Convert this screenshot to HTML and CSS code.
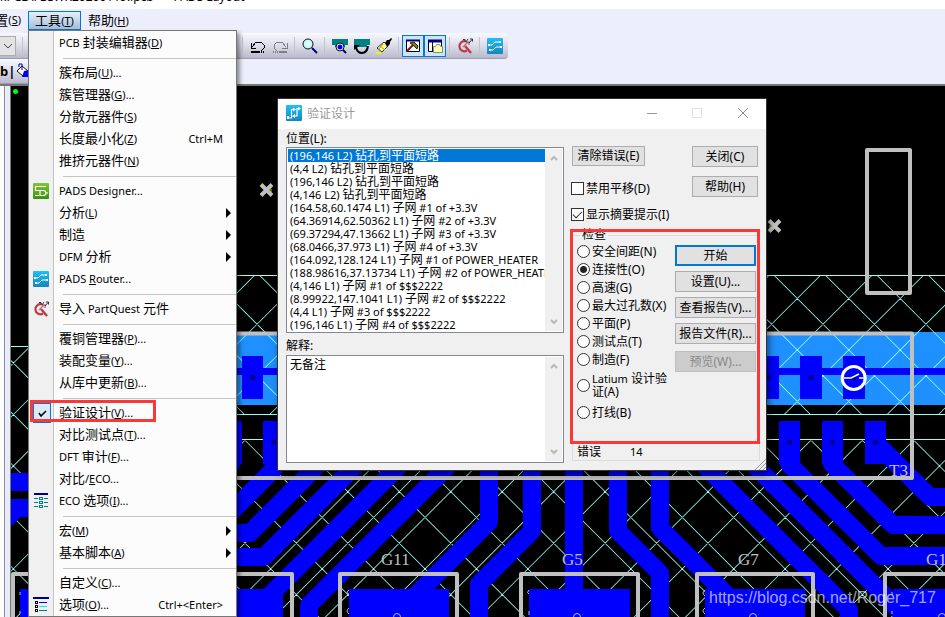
FILE: index.html
```html
<!DOCTYPE html>
<html lang="zh-CN">
<head>
<meta charset="utf-8">
<title>PADS Layout</title>
<link rel="stylesheet" href="styles.css">
</head>
<body>
<div class="app">
  <header class="titlebar"><span>kPCB\FLCWK20200119.ipcb * - PADS Layout</span></header>
  <nav class="menubar">
    <button class="menubar-item clipped" type="button">置<small>(<u>S</u>)</small></button>
    <button class="menubar-item open" type="button">工具<small>(<u>T</u>)</small></button>
    <button class="menubar-item" type="button">帮助<small>(<u>H</u>)</small></button>
  </nav>
  <div class="toolbar-row">
    <div class="toolbar">
      <button class="combo" type="button" aria-label="层"><svg width="10" height="6" viewBox="0 0 10 6"><path d="M1 1l4 4 4-4" fill="none" stroke="#444"/></svg></button>
      <i class="sep"></i>
      <div class="tools">
        <i class="sep"></i>
        <button class="tool" type="button" aria-label="撤销"><svg width="16" height="16" viewBox="0 0 16 16" shape-rendering="crispEdges"><path d="M1 5v5h5M2 9l4-5h5l3 3v3l-2 2h-1" fill="none" stroke="#000"/><path d="M1 14h8" stroke="#000" stroke-width="2"/><path d="M9 14h6" stroke="#000" stroke-width="2" stroke-dasharray="1 1"/></svg></button>
        <button class="tool" type="button" aria-label="重做"><svg width="16" height="16" viewBox="0 0 16 16" shape-rendering="crispEdges"><path d="M15 5v5h-5M14 9l-4-5H5L2 7v3l2 2h1" fill="none" stroke="#7d7d88"/><path d="M7 14h8" stroke="#7d7d88" stroke-width="2"/><path d="M1 14h6" stroke="#7d7d88" stroke-width="2" stroke-dasharray="1 1"/></svg></button>
        <i class="sep"></i>
        <button class="tool" type="button" aria-label="缩放"><svg width="16" height="16" viewBox="0 0 16 16"><circle cx="6" cy="6" r="5" fill="#c9fafa" stroke="#111"/><path d="M4 7l3-4M6 8l2-3" stroke="#fff"/><path d="M10 10l5 5" stroke="#00007c" stroke-width="2"/></svg></button>
        <i class="sep"></i>
        <button class="tool" type="button" aria-label="板视图"><svg width="16" height="16" viewBox="0 0 16 16"><path d="M0 1h16v6h-3v2H3V7H0z" fill="#008080"/><circle cx="8" cy="9" r="4" fill="#fff" stroke="#111"/><circle cx="8" cy="9" r="2.5" fill="#00f"/><path d="M11 12l3 3" stroke="#00007c" stroke-width="2"/></svg></button>
        <button class="tool" type="button" aria-label="刷新"><svg width="16" height="16" viewBox="0 0 16 16"><path d="M0 1h16v6h-3v2H3V7H0z" fill="#008080"/><path d="M2 9q1 6 6 6 5 0 6-7" fill="none" stroke="#000" stroke-width="2"/><path d="M0 12V7h6z" fill="#000"/></svg></button>
        <button class="tool" type="button" aria-label="高亮"><svg width="16" height="16" viewBox="0 0 16 16"><path d="M8 4l4 4-6 6-5-4z" fill="#ffff9a" stroke="#333"/><path d="M4 8l5 4M3 11l4-5" stroke="#b0a800"/><path d="M9 5l2-3h2l2-2 1 1-2 3v2l-3 3z" fill="#000"/><path d="M0 15h5" stroke="#fe0" stroke-width="2"/></svg></button>
        <i class="sep"></i>
        <span class="pressed">
          <button class="tool" type="button" aria-label="设计工具"><svg width="16" height="16" viewBox="0 0 16 16"><path d="M1.500 2.500h13v11h-13z" fill="#fff" stroke="#000"/><path d="M1 2.500h14" stroke="#000080" stroke-width="2"/><path d="M2 13l6-6" stroke="#801010" stroke-width="2"/><path d="M5 5l4-1 4 4-1 3-4-4z" fill="#808000" stroke="#222"/></svg></button>
          <button class="tool" type="button" aria-label="项目浏览器"><svg width="16" height="16" viewBox="0 0 16 16"><path d="M1.500 2.500h13v11h-13z" fill="#fff" stroke="#000"/><path d="M1 3h14" stroke="#000080" stroke-width="3"/><path d="M5.500 4v9" stroke="#111"/><path d="M6.500 8.500h2l1-2h3l1 2h2v6h-9z" fill="#ffffb0" stroke="#888"/></svg></button>
        </span>
        <i class="sep"></i>
        <button class="tool" type="button" aria-label="PartQuest"><svg width="16" height="16" viewBox="0 0 16 16"><use href="#pq"/></svg></button>
        <i class="sep"></i>
        <button class="tool" type="button" aria-label="PADS Router"><svg width="16" height="16" viewBox="0 0 16 16"><use href="#router"/></svg></button>
      </div>
    </div>
  </div>
  <div class="toolbar-row second">
    <div class="toolbar"><b>b|</b>
      <button class="tool" type="button" aria-label="填充"><svg width="16" height="16" viewBox="0 0 16 16"><path d="M2 8l5-5 6 5-5 5z" fill="#fff" stroke="#111"/><path d="M4 4V1h3v6" fill="none" stroke="#00a"/><path d="M9 8l5-1-1 5h2v2H7z" fill="#00f"/></svg></button>
    </div>
  </div>

  <main class="workspace">
    <aside class="side"></aside>
    <svg class="board" viewBox="11 86 934 531" preserveAspectRatio="xMinYMin slice" role="img" aria-label="PCB">
      <defs>
        <clipPath id="clipTop"><rect x="237" y="275" width="708" height="139"/></clipPath>
        <clipPath id="clipLow"><path d="M11 346H237V439H945V617H11z"/></clipPath>
        <linearGradient id="sky" x1="0" y1="0" x2="0" y2="1"><stop offset="0" stop-color="#1fc0f5"/><stop offset="1" stop-color="#1287bd"/></linearGradient>
        <g id="router"><rect width="16" height="16" rx="1" fill="url(#sky)"/><path d="M2 7h3l3-3h5M3 12h3l3-3h5" fill="none" stroke="#fff"/><path d="M1 6h2v2H1zM12 3h2v2h-2zM2 11h2v2H2zM13 8h2v2h-2z" fill="#fff"/></g>
        <g id="pq"><path d="M9 3.500A5 5 0 1 0 10 12.500" fill="none" stroke="#c23a48" stroke-width="2.200"/><path d="M8 8l6 7" stroke="#c23a48" stroke-width="2.500"/><path d="M6 9l5-5M9 4h3v3" fill="none" stroke="#b0707a" stroke-width="1.400"/><path d="M6 1.500h2v2M9 4l2-3M12 5l3-3.500M13 1h2.500v2.500" fill="none" stroke="#333"/></g>
      </defs>
      <rect x="11" y="86" width="934" height="531" fill="#000"/>
      <rect x="237" y="332" width="708" height="73" fill="#1e90ff"/>
      <g clip-path="url(#clipTop)"><path class="stripes" transform="translate(797.3 298.5)" d="M-1029 -1029L1029 1029M-1029 1029L1029 -1029"/></g>
      <g clip-path="url(#clipLow)"><path class="stripes" transform="translate(708 491.7)" d="M-1029 -1029L1029 1029M-1029 1029L1029 -1029"/></g>
      <path class="hatch" d="M237 275.500H945M237 414.500H945M237 439.500H945M11 346.500H237"/>
      <path class="bus" d="M237 371.500H945"/>
      <path class="pad" d="M242 356h21v43h-21zM757 356h22v43h-22zM800 356h22v43h-22zM843 356h22v43h-22zM220 421h22v43h-22zM263 421h22v43h-22zM779 421h21v43h-21zM822 421h21v43h-21zM865 421h21v43h-21z"/>
      <path class="pad" d="M20 589h100v28H20zM183 589h100v28H183zM349 589h100v28H349zM529 589h101v28H529zM705 589h100v28H705zM893 589h52v28H893z"/>
      <g class="trace">
        <path d="M11 482H100M11 508H100M17 508L5 520"/>
        <path d="M274 440V469L200 543M231 440V464L190 505M317 464V466L250 533H200M370 451L264 557H200M410 455L266 599M450 464L309 605V617"/>
        <path d="M489 460V522L412 599M532 460V531L479 584V617M574 460V599M618 460V531L660 573V617M660 460V528L731 599"/>
        <path d="M697 458L849 610V617M740 451L903 614M789 442V464L881 556H945M832 442V464L893 525H945M875 442L930 497H945"/>
      </g>
      <g fill="#000080"><circle cx="252.500" cy="377.500" r="2.500"/><circle cx="768" cy="377.500" r="2.500"/><circle cx="811" cy="377.500" r="2.500"/><circle cx="854" cy="377.500" r="2.500"/><circle cx="273.500" cy="442" r="2.500"/><circle cx="789.500" cy="442" r="2.500"/><circle cx="832.500" cy="442" r="2.500"/><circle cx="875.500" cy="442" r="2.500"/></g>
      <g class="silk">
        <path d="M237 333.500H912V478H237"/>
        <rect x="867" y="150" width="43" height="143"/>
        <path d="M13 617V574H130V617M174 617V574H292V617M340 617V574H457V617M521 617V574H638V617M697 617V574H813V617M885 617V574H945"/>
      </g>
      <g class="silk thin"><circle cx="397" cy="617" r="3.500"/><circle cx="577" cy="617" r="3.500"/><circle cx="753" cy="617" r="3.500"/><circle cx="942" cy="617" r="3.500"/>
        <path d="M349 590q-4 3 0 6M349 608q-4 3 0 6M529 590q-3 3 0 4M529 611v4M705 590q-4 3 0 6M705 608q-4 3 0 6M892 592v3M892 611v3M20 592v3M20 611v3"/></g>
      <path class="mark" d="M261 184.500l11 11M272 184.500l-11 11M769 220.500l11 11M780 220.500l-11 11"/>
      <path d="M271 189v3M770 225v3" stroke="#c8c800"/>
      <circle cx="853.700" cy="378" r="11.500" fill="none" stroke="#fff" stroke-width="3"/>
      <path d="M844 378h7l8-4M859 378h5" fill="none" stroke="#fff" stroke-width="1.500"/>
      <circle cx="15.500" cy="91.500" r="2.500" fill="#0f0"/>
      <g class="ref"><text x="381" y="565">G11</text><text x="562" y="565">G5</text><text x="738" y="565">G7</text><text x="926" y="565">G13</text><text x="889" y="476">T3</text></g>
      <text class="watermark" x="709" y="603">https://blog.csdn.net/Roger_717</text>
    </svg>
  </main>

  <div class="menu" role="menu">
    <button type="button"><i></i><span>PCB <b>封装编辑器</b>(<u>D</u>)</span></button>
    <hr>
    <button type="button"><i></i><span><b>簇布局</b>(<u>U</u>)...</span></button>
    <button type="button"><i></i><span><b>簇管理器</b>(<u>G</u>)...</span></button>
    <button type="button"><i></i><span><b>分散元器件</b>(<u>S</u>)</span></button>
    <button type="button"><i></i><span><b>长度最小化</b>(<u>Z</u>)</span><kbd>Ctrl+M</kbd></button>
    <button type="button"><i></i><span><b>推挤元器件</b>(<u>N</u>)</span></button>
    <hr>
    <button type="button"><i><svg width="16" height="16" viewBox="0 0 16 16"><defs><linearGradient id="leaf" x1="0" y1="0" x2="0" y2="1"><stop offset="0" stop-color="#7fc832"/><stop offset="1" stop-color="#3d8f12"/></linearGradient></defs><rect width="16" height="16" rx="1" fill="url(#leaf)"/><path d="M13 3.500H2.500v4H7M2 12.500h4M7 7.500h3q3 0 3 2.500t-3 2.500H7zM13 10h2" fill="none" stroke="#fff" stroke-width="1.200"/></svg></i><span>PADS Desi<u>g</u>ner...</span></button>
    <button type="button"><i></i><span><b>分析</b>(<u>L</u>)</span><em></em></button>
    <button type="button"><i></i><span><b>制造</b></span><em></em></button>
    <button type="button"><i></i><span>DFM <b>分析</b></span><em></em></button>
    <button type="button"><i><svg width="16" height="16" viewBox="0 0 16 16"><use href="#router"/></svg></i><span>PADS <u>R</u>outer...</span></button>
    <hr>
    <button type="button"><i><svg width="16" height="16" viewBox="0 0 16 16"><use href="#pq"/></svg></i><span><b>导入</b> PartQuest <b>元件</b></span></button>
    <hr>
    <button type="button"><i></i><span><b>覆铜管理器</b>(<u>P</u>)...</span></button>
    <button type="button"><i></i><span><b>装配变量</b>(<u>Y</u>)...</span></button>
    <button type="button"><i></i><span><b>从库中更新</b>(<u>B</u>)...</span></button>
    <hr>
    <button type="button" class="checked"><i><svg width="18" height="20" viewBox="0 0 18 20"><rect x=".5" y=".5" width="17" height="19" fill="#d9e9f8" stroke="#0078d7"/><path d="M6 10l2 3 5-5" fill="none" stroke="#000" stroke-width="1.500"/></svg></i><span><b>验证设计</b>(<u>V</u>)...</span></button>
    <button type="button"><i></i><span><b>对比测试点</b>(<u>T</u>)...</span></button>
    <button type="button"><i></i><span>DFT <b>审计</b>(<u>F</u>)...</span></button>
    <button type="button"><i></i><span><b>对比</b>/<u>E</u>CO...</span></button>
    <button type="button"><i><svg width="16" height="16" viewBox="0 0 16 16" shape-rendering="crispEdges"><path d="M1 1h14" stroke="#000080" stroke-width="2"/><path d="M1 5.500h4M1 9.500h4M1 13.500h4M11 5.500h4M11 9.500h4M11 13.500h4" stroke="#008080"/><path d="M6.500 4.500h3v2h-3zM6.500 8.500h3v2h-3zM6.500 12.500h3v2h-3z" fill="#fff" stroke="#008080"/></svg></i><span>ECO <b>选项</b>(<u>I</u>)...</span></button>
    <hr>
    <button type="button"><i></i><span><b>宏</b>(<u>M</u>)</span><em></em></button>
    <button type="button"><i></i><span><b>基本脚本</b>(<u>A</u>)</span><em></em></button>
    <hr>
    <button type="button"><i></i><span><b>自定义</b>(<u>C</u>)...</span></button>
    <button type="button"><i><svg width="16" height="16" viewBox="0 0 16 16" shape-rendering="crispEdges"><path d="M0 1h16" stroke="#000080" stroke-width="2"/><path d="M2.500 4.500h2v2h-2zM2.500 8.500h2v2h-2zM2.500 12.500h2v2h-2z" fill="#fff" stroke="#000"/><path d="M6 5.500h8" stroke="#00f"/><path d="M6 9.500h8" stroke="#0ee"/><path d="M6 13.500h8" stroke="#008080"/></svg></i><span><b>选项</b>(<u>O</u>)...</span><kbd>Ctrl+&lt;Enter&gt;</kbd></button>
    <div class="callout callout-menu"></div>
  </div>

  <section class="dialog" role="dialog" aria-label="验证设计">
    <div class="dialog-title">
      <svg width="16" height="16" viewBox="0 0 16 16"><rect width="16" height="16" rx="1" fill="url(#sky)"/><path d="M1.500 13h4V4.500h3M14 3.500h-3V11h-3" fill="none" stroke="#fff" stroke-width="1.200"/><path d="M7 2.500l3 2-3 2zM12 2l3 1.500-3 2zM9 9l-3 2 3 2zM1 11h2v3H1z" fill="#fff"/></svg>
      <span>验证设计</span>
      <svg class="win" width="104" height="12" viewBox="0 0 104 12"><path d="M1 6.500h10" stroke="#999"/><rect x="46.500" y="1.500" width="9" height="9" fill="none" stroke="#e2e2e2"/><path d="M92 1l10 10M102 1L92 11" stroke="#888"/></svg>
    </div>
    <div class="dialog-body">
      <div class="results">
        <label id="loc">位置(L):</label>
        <div class="field">
          <ul role="listbox" aria-labelledby="loc">
            <li class="selected">(196,146 L2) <b>钻孔到平面短路</b></li>
            <li>(4,4 L2) <b>钻孔到平面短路</b></li>
            <li>(196,146 L2) <b>钻孔到平面短路</b></li>
            <li>(4,146 L2) <b>钻孔到平面短路</b></li>
            <li>(164.58,60.1474 L1) <b>子网</b> #1 of +3.3V</li>
            <li>(64.36914,62.50362 L1) <b>子网</b> #2 of +3.3V</li>
            <li>(69.37294,47.13662 L1) <b>子网</b> #3 of +3.3V</li>
            <li>(68.0466,37.973 L1) <b>子网</b> #4 of +3.3V</li>
            <li>(164.092,128.124 L1) <b>子网</b> #1 of POWER_HEATER</li>
            <li>(188.98616,37.13734 L1) <b>子网</b> #2 of POWER_HEATER</li>
            <li>(4,146 L1) <b>子网</b> #1 of $$$2222</li>
            <li>(8.99922,147.1041 L1) <b>子网</b> #2 of $$$2222</li>
            <li>(4,4 L1) <b>子网</b> #3 of $$$2222</li>
            <li>(196,146 L1) <b>子网</b> #4 of $$$2222</li>
          </ul>
          <div class="scroll"><svg width="8" height="6" viewBox="0 0 8 6"><path d="M1 5l3-3 3 3"/></svg><svg width="8" height="6" viewBox="0 0 8 6"><path d="M1 1l3 3 3-3"/></svg></div>
        </div>
        <label for="note" class="note-label">解释:</label>
        <div class="field">
          <textarea id="note" rows="6">无备注</textarea>
          <div class="scroll"><svg width="8" height="6" viewBox="0 0 8 6"><path d="M1 5l3-3 3 3"/></svg><svg width="8" height="6" viewBox="0 0 8 6"><path d="M1 1l3 3 3-3"/></svg></div>
        </div>
      </div>
      <div class="controls">
        <div class="top">
          <div class="options">
            <button class="btn clear" type="button">清除错误(E)</button>
            <label><input type="checkbox">禁用平移(D)</label>
            <label><input type="checkbox" checked>显示摘要提示(I)</label>
          </div>
          <div class="closers">
            <button class="btn" type="button">关闭(C)</button>
            <button class="btn" type="button">帮助(H)</button>
          </div>
        </div>
        <fieldset>
          <legend>检查</legend>
          <div class="checks">
            <div class="radios">
              <label><input type="radio" name="check">安全间距(N)</label>
              <label><input type="radio" name="check" checked>连接性(O)</label>
              <label><input type="radio" name="check">高速(G)</label>
              <label><input type="radio" name="check">最大过孔数(X)</label>
              <label><input type="radio" name="check">平面(P)</label>
              <label><input type="radio" name="check">测试点(T)</label>
              <label><input type="radio" name="check">制造(F)</label>
              <label class="tall"><input type="radio" name="check"><span><small>Latium</small> 设计验<br>证(A)</span></label>
              <label><input type="radio" name="check">打线(B)</label>
            </div>
            <div class="actions">
              <button class="btn primary" type="button">开始</button>
              <button class="btn" type="button">设置(U)...</button>
              <button class="btn" type="button">查看报告(V)...</button>
              <button class="btn" type="button">报告文件(R)...</button>
              <button class="btn preview" type="button" disabled>预览(W)...</button>
            </div>
          </div>
        </fieldset>
        <div class="status"><span>错误</span><small>14</small></div>
        <div class="callout callout-checks"></div>
      </div>
    </div>
    <svg class="grip" width="11" height="11" viewBox="0 0 11 11"><path d="M0 11L11 0M4 11l7-7M8 11l3-3" stroke="#999"/></svg>
  </section>
</div>
</body>
</html>
```
FILE: styles.css
```css
* { box-sizing: border-box; }
body {
  margin: 0;
  font-family: "Noto Sans", "Noto Sans CJK SC", sans-serif;
  font-size: 12px;
  color: #000;
}
button { font-family: inherit; color: inherit; padding: 0; }
.app {
  position: relative;
  display: flex;
  flex-direction: column;
  height: 100vh;
  overflow: hidden;
  background: #eceffb;
}
.titlebar {
  display: flex;
  align-items: flex-end;
  height: 9px;
  overflow: hidden;
  background: #fff;
  font-size: 12px;
  line-height: 24px;
  white-space: nowrap;
}
.menubar { display: flex; height: 24px; padding-top: 2px; gap: 6px; }
.menubar-item {
  height: 19px;
  border: 1px solid transparent;
  background: none;
  font-size: 13px;
  line-height: 16px;
}
.menubar-item small { font-size: 11px; }
.menubar-item.clipped { width: 22px; display: flex; justify-content: flex-end; }
.menubar-item.open {
  width: 53px;
  border-color: #0078d7;
  background: linear-gradient(#e4effa, #a4bdd6);
}
.toolbar-row { display: flex; height: 26px; }
.toolbar {
  display: flex;
  align-items: center;
  width: 508px;
  border-bottom: 1px solid #9c9cb4;
  border-radius: 0 4px 4px 0;
  background: linear-gradient(#f8f9fe, #dcdde9 50%, #b9b9cb);
}
.second .toolbar { width: 230px; }
.second { height: 25px; }
.second b { width: 12px; font-size: 13px; }
.combo {
  display: flex;
  align-items: center;
  justify-content: center;
  width: 16px;
  height: 20px;
  margin-right: 6px;
  border: 1px solid #acacac;
  border-left: 0;
  background: #e3e3e6;
}
.sep { width: 1px; height: 18px; background: #c3c3cd; }
.tools { display: flex; align-items: center; margin-left: auto; padding-right: 2px; }
.tools .sep { margin: 0 3px; }
.tools .sep + .tool { margin-left: 1px; }
.tool {
  display: flex;
  align-items: center;
  justify-content: center;
  width: 22px;
  height: 22px;
  border: 0;
  background: none;
}
.pressed { display: flex; }
.pressed .tool { border: 1px solid #0078d7; background: #cfe3f6; }

.workspace { display: flex; flex: 1; min-height: 0; border-top: 2px solid #777; }
.side {
  width: 11px;
  border-right: 1px solid #777;
  background: linear-gradient(90deg, #fff 4px, #8b8b9b 4px, #8b8b9b 5px, #e9ecfa 5px);
}
.board { flex: 1; min-width: 0; height: 100%; background: #000; }
.hatch { fill: none; stroke: #98fff6; stroke-width: 1; shape-rendering: crispEdges; }
/* Evenly spaced diagonal lines: the dashes of one very wide stroke. */
.stripes {
  fill: none;
  stroke: #98fff6;
  stroke-width: 3000;
  stroke-dasharray: .8 35.5806;
  stroke-dashoffset: .4;
}
.bus { stroke: #00f; stroke-width: 7; }
.pad { fill: #00f; }
.trace { fill: none; stroke: #00f; stroke-width: 18; stroke-linejoin: round; }
.silk { fill: none; stroke: #c0c0c0; stroke-width: 4; stroke-linejoin: round; }
.silk.thin { stroke-width: 1; }
.mark { stroke: #c0c0c0; stroke-width: 4; }
.ref { font: 17px "Liberation Serif", serif; fill: #c0c0c0; }
.watermark { font: 16px "Liberation Sans", sans-serif; fill: #fff; fill-opacity: .65; }

.menu {
  position: absolute;
  left: 28px;
  top: 30px;
  width: 209px;
  padding-top: 1px;
  border: 1px solid #777;
  background: linear-gradient(90deg, #f0f0f0 24px, #c3c3c3 24px, #c3c3c3 25px, #fcfcfc 25px);
  box-shadow: 3px 3px 4px rgba(0, 0, 0, .4);
  font-size: 11px;
}
.menu button {
  display: flex;
  align-items: center;
  width: 100%;
  height: 22px;
  border: 0;
  background: none;
  font-size: 11px;
  line-height: 20px;
  text-align: left;
  white-space: nowrap;
}
.menu b, li b { font-weight: 400; }
.menu b { font-size: 13px; line-height: 12px; }
.menu i { display: flex; justify-content: center; width: 24px; margin-right: 6px; }
.menu .checked i { justify-content: flex-end; width: 22px; margin-right: 8px; }
.menu kbd { margin-left: auto; margin-right: 13px; font: inherit; }
.menu em {
  margin-left: auto;
  margin-right: 5px;
  border: 5px solid transparent;
  border-left-color: #000;
  border-right: 0;
}
.menu hr { height: 1px; margin: 4px 0 3px 34px; border: 0; background: #c6c6c6; }
.callout { position: absolute; border: 3px solid #fb3737; pointer-events: none; }
.callout-menu { left: 1px; top: 369px; width: 126px; height: 22px; }
.callout-checks { left: -2px; top: 98px; width: 190px; height: 215px; }

.dialog {
  position: absolute;
  left: 278px;
  top: 99px;
  width: 488px;
  background: #f0f0f0;
  box-shadow: 0 0 0 1px #333, 2px 3px 8px rgba(0, 0, 0, .6);
}
.dialog-title {
  display: flex;
  align-items: center;
  height: 30px;
  padding: 0 16px 2px 8px;
  gap: 5px;
  background: #fff;
  color: #999;
}
.win { margin-left: auto; }
.dialog-body { display: flex; gap: 8px; padding: 2px 6px 7px 8px; }
.results { display: flex; flex-direction: column; width: 278px; }
.results > label { height: 16px; line-height: 16px; }
.results .note-label { margin-top: 5px; height: 17px; }
.field {
  display: flex;
  padding: 1px;
  border: 1px solid #828790;
  background: #fff;
}
ul { flex: 1; min-width: 0; margin: 0; padding: 0; overflow: hidden; list-style: none; }
li {
  height: 13px;
  padding-left: 2px;
  font-size: 11px;
  line-height: 13px;
  white-space: nowrap;
}
li b { font-size: 12px; line-height: 12px; }
li.selected { background: #0078d7; color: #fff; }
textarea {
  flex: 1;
  min-width: 0;
  height: 104px;
  padding: 0 2px;
  border: 0;
  background: none;
  font: inherit;
  line-height: 15px;
  resize: none;
  overflow: hidden;
  outline: 0;
}
.scroll {
  display: flex;
  flex-direction: column;
  align-items: center;
  justify-content: space-between;
  width: 17px;
  padding: 6px 0;
  background: #f0f0f0;
}
.scroll path { fill: none; stroke: #b8b8b8; stroke-width: 2; }
.controls { position: relative; flex: 1; padding-top: 15px; }
.top { display: flex; justify-content: space-between; height: 82px; padding-right: 2px; }
.options, .closers { display: flex; flex-direction: column; }
.closers { gap: 9px; }
.btn {
  height: 21px;
  width: 66px;
  border: 1px solid #adadad;
  background: #e1e1e1;
  font-size: 12px;
  line-height: 18px;
  white-space: nowrap;
}
.btn.clear { width: 73px; margin-bottom: 14px; }
.options label { display: flex; align-items: center; gap: 2px; height: 16px; margin-bottom: 10px; white-space: nowrap; }
.options label, .radios label { margin-left: -1px; }
input { appearance: none; flex: none; width: 13px; height: 13px; margin: 0; border: 1px solid #333; background: #fff; }
input[type="checkbox"]:checked::after {
  content: "";
  display: block;
  width: 8px;
  height: 4px;
  margin: 2px 1px;
  border-left: 1px solid #333;
  border-bottom: 1px solid #333;
  transform: rotate(-45deg);
}
input[type="radio"] { border-radius: 50%; }
input[type="radio"]:checked { background: radial-gradient(#222 3px, #fff 4px); }
fieldset { height: 214px; margin: 0; padding: 0 3px 0 5px; border: 1px solid #dcdcdc; border-bottom: 0; min-width: 0; }
legend { height: 14px; margin-left: 2px; padding: 0 2px; line-height: 14px; }
.checks { display: flex; justify-content: space-between; }
.radios label { display: flex; align-items: center; gap: 2px; height: 18px; white-space: nowrap; }
.radios .tall { height: 34px; line-height: 13px; }
.radios .tall + label { height: 20px; }
.radios small { font-size: 11px; }
.actions { display: flex; flex-direction: column; gap: 5px; padding-top: 3px; }
.actions .btn { width: 81px; }
.actions .primary { border: 2px solid #0078d7; line-height: 16px; }
.actions .preview { margin-top: 2px; border-color: #bfbfbf; background: #ccc; color: #888; }
.status {
  display: flex;
  align-items: center;
  height: 19px;
  padding-left: 4px;
  gap: 29px;
  border: 1px solid #dcdcdc;
  border-top: 0;
}
.status small { font-size: 11px; }
.grip { position: absolute; right: 0; bottom: 0; }
```
